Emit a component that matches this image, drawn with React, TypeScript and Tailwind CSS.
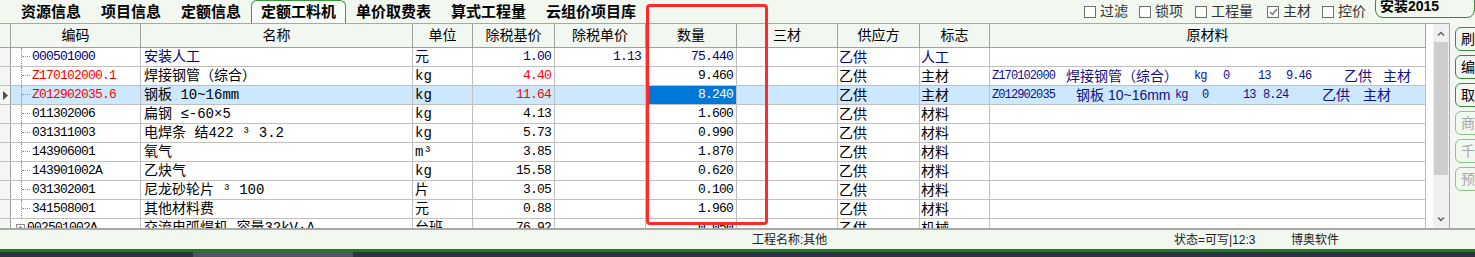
import React from "react";

type Row = {
  code: string;
  name: string;
  unit: string;
  base: string;
  price?: string;
  qty: string;
  supply: string;
  flag: string;
  tone?: "navy" | "red";
  raw?: [string, string, boolean][];
  group?: boolean;
};

const mono = "font-['Liberation_Mono','Noto_Sans_CJK_SC',monospace] tracking-[-0.8px] text-[13px]";

const rows: Row[] = [
  { code: "000501000", name: "安装人工", unit: "元", base: "1.00", price: "1.13", qty: "75.440", supply: "乙供", flag: "人工", tone: "navy" },
  {
    code: "Z170102000.1", name: "焊接钢管（综合）", unit: "kg", base: "4.40", qty: "9.460", supply: "乙供", flag: "主材", tone: "red",
    raw: [
      ["Z170102000", "w-[74px]", true],
      ["焊接钢管（综合）", "w-[128px]", false],
      ["kg", "w-[29px]", true],
      ["0", "w-[35px]", true],
      ["13", "w-[28px]", true],
      ["9.46", "w-[58px]", true],
      ["乙供", "w-[39px]", false],
      ["主材", "w-[40px]", false],
    ],
  },
  {
    code: "Z012902035.6", name: "钢板 10~16mm", unit: "kg", base: "11.64", qty: "8.240", supply: "乙供", flag: "主材", tone: "red",
    raw: [
      ["Z012902035", "w-[84px]", true],
      ["钢板 10~16mm", "w-[99px]", false],
      ["kg", "w-[27px]", true],
      ["0", "w-[41px]", true],
      ["13", "w-[20px]", true],
      ["8.24", "w-[59px]", true],
      ["乙供", "w-[41px]", false],
      ["主材", "w-[40px]", false],
    ],
  },
  { code: "011302006", name: "扁钢 ≤-60×5", unit: "kg", base: "4.13", qty: "1.600", supply: "乙供", flag: "材料" },
  { code: "031311003", name: "电焊条 结422 ³ 3.2", unit: "kg", base: "5.73", qty: "0.990", supply: "乙供", flag: "材料" },
  { code: "143906001", name: "氧气", unit: "m³", base: "3.85", qty: "1.870", supply: "乙供", flag: "材料" },
  { code: "143901002A", name: "乙炔气", unit: "kg", base: "15.58", qty: "0.620", supply: "乙供", flag: "材料" },
  { code: "031302001", name: "尼龙砂轮片 ³ 100", unit: "片", base: "3.05", qty: "0.100", supply: "乙供", flag: "材料" },
  { code: "341508001", name: "其他材料费", unit: "元", base: "0.88", qty: "1.960", supply: "乙供", flag: "材料" },
  { code: "002501002A", name: "交流电弧焊机 容量32kV·A", unit: "台班", base: "76.92", qty: "0.050", supply: "乙供", flag: "机械", group: true },
];

const heads: [string, string][] = [
  ["编码", "w-[130px]"],
  ["名称", "w-[272px]"],
  ["单位", "w-[60px]"],
  ["除税基价", "w-[82px]"],
  ["除税单价", "w-[91px]"],
  ["数量", "w-[91px]"],
  ["三材", "w-[101px]"],
  ["供应方", "w-[82px]"],
  ["标志", "w-[70px]"],
  ["原材料", "w-[436px]"],
];

const tabs = ["资源信息", "项目信息", "定额信息", "定额工料机", "单价取费表", "算式工程量", "云组价项目库"];

const cell = "h-full shrink-0 border-r border-[#c0c0c0] flex items-center overflow-hidden whitespace-nowrap";

function Check({ label, checked, className }: { label: string; checked?: boolean; className?: string }) {
  return (
    <div className={`flex items-center gap-[4px] ${className ?? ""}`}>
      <span className="w-[12px] h-[12px] border border-[#707070] bg-white flex items-center justify-center">
        {checked && (
          <svg width="9" height="8" viewBox="0 0 9 8">
            <polyline points="1,4 3.5,6.5 8,1" fill="none" stroke="#707070" strokeWidth="1.3" />
          </svg>
        )}
      </span>
      <span className="text-[14px] text-[#333]">{label}</span>
    </div>
  );
}

function GridRow({ r, selected }: { r: Row; selected: boolean }) {
  const navy = r.tone === "navy";
  const base = navy ? "text-[#000080]" : "text-black";
  const codeColor = r.tone === "red" ? "text-[#ff0000]" : base;
  const bg = selected ? "bg-[#cce8ff]" : "bg-white";
  return (
    <div className={`flex h-[19px] shrink-0 border-b border-[#c0c0c0] ${bg}`}>
      <div className="w-[11px] h-full shrink-0 border-r border-[#a0a0a0] bg-[#f3f7f1] flex items-center justify-center">
        {selected && (
          <svg width="5" height="9" viewBox="0 0 5 9">
            <polygon points="0,0 5,4.5 0,9" fill="#505050" />
          </svg>
        )}
      </div>
      <div className={`${cell} w-[130px]`}>
        {r.group ? (
          <div className="ml-[5px] w-[9px] h-[9px] border border-[#909090] bg-white flex items-center justify-center text-[9px] leading-none text-[#606060]">
            +
          </div>
        ) : (
          <div className="ml-[10px] w-[9px] h-full border-l border-dotted border-[#909090] flex flex-col">
            <div className="h-[9px] border-b border-dotted border-[#909090]" />
          </div>
        )}
        <span className={`ml-[2px] ${mono} ${codeColor}`}>{r.code}</span>
      </div>
      <div className={`${cell} w-[272px] pl-[3px] text-[14px] font-['Liberation_Mono','Noto_Sans_CJK_SC',monospace] ${base}`}>{r.name}</div>
      <div className={`${cell} w-[60px] pl-[2px] text-[14px] font-['Liberation_Mono','Noto_Sans_CJK_SC',monospace] ${base}`}>{r.unit}</div>
      <div className={`${cell} w-[82px] justify-end pr-[3px] ${mono} ${codeColor}`}>{r.base}</div>
      <div className={`${cell} w-[91px] justify-end pr-[4px] ${mono} ${base}`}>{r.price}</div>
      <div className={`${cell} w-[91px] justify-end pr-[3px] ${mono} ${selected ? "bg-[#0078d7] text-white" : base}`}>{r.qty}</div>
      <div className={`${cell} w-[101px]`} />
      <div className={`${cell} w-[82px] pl-[1px] text-[14px] ${base}`}>{r.supply}</div>
      <div className={`${cell} w-[70px] pl-[1px] text-[14px] ${base}`}>{r.flag}</div>
      <div className={`${cell} w-[436px] pl-[2px] text-[#10108a]`}>
        {r.raw?.map(([t, w, m], i) => (
          <span
            key={i}
            className={`${w} shrink-0 ${m ? "font-['Liberation_Mono',monospace] text-[12px] tracking-[-0.9px]" : "text-[14px]"}`}
          >
            {t}
          </span>
        ))}
      </div>
    </div>
  );
}

export default function App() {
  return (
    <div className="relative w-[1475px] h-[257px] overflow-hidden bg-[#f2f7f0] flex flex-col font-['Liberation_Sans','Noto_Sans_CJK_SC',sans-serif] text-black">
      {/* tabs + options */}
      <div className="flex h-[23px] shrink-0 items-center">
        <div className="flex h-full pl-[11px]">
          {tabs.map((t, i) => (
            <div
              key={t}
              className={`h-[23px] px-[9px] flex items-center text-[15px] font-bold border border-b-0 rounded-t-[6px] ${
                i === 3 ? "border-[#3a9a3a] bg-[#f8fbf7]" : "border-transparent"
              }`}
            >
              {t}
            </div>
          ))}
        </div>
        <div className="ml-auto flex items-center h-full">
          <Check label="过滤" />
          <Check label="锁项" className="ml-[11px]" />
          <Check label="工程量" className="ml-[12px]" />
          <Check label="主材" checked className="ml-[14px]" />
          <Check label="控价" className="ml-[11px]" />
          <div className="ml-[9px] w-[100px] h-[24px] -mt-[12px] self-start mt-[-6px] border border-[#3a8a3a] rounded-[8px] pl-[4px] flex items-center text-[14px] font-bold">
            安装2015
          </div>
        </div>
      </div>

      {/* grid area */}
      <div className="flex h-[205px] shrink-0">
        <div className="w-[1452px] h-full flex bg-white border-t border-r border-[#a8a8a8]">
          <div className="w-[1426px] h-full flex flex-col overflow-hidden">
            <div className="flex h-[24px] shrink-0 bg-[#f3f7f1] border-b border-[#a0a0a0]">
              <div className="w-[11px] h-full border-r border-[#a0a0a0]" />
              {heads.map(([h, w]) => (
                <div key={h} className={`${w} h-full shrink-0 border-r border-[#a0a0a0] flex items-center justify-center text-[14px]`}>
                  {h}
                </div>
              ))}
            </div>
            {rows.map((r, i) => (
              <GridRow key={r.code} r={r} selected={i === 2} />
            ))}
          </div>
          <div className="w-[7px]" />
          <div className="w-[16px] h-full bg-[#f0f0f0] flex flex-col">
            <div className="h-[18px] flex items-center justify-center">
              <svg width="8" height="5" viewBox="0 0 8 5">
                <polyline points="1,4.5 4,1.5 7,4.5" fill="none" stroke="#606060" strokeWidth="1.4" />
              </svg>
            </div>
            <div className="h-[133px] mx-[1px] bg-[#cdcdcd]" />
            <div className="flex-1" />
            <div className="h-[18px] flex items-center justify-center">
              <svg width="8" height="5" viewBox="0 0 8 5">
                <polyline points="1,0.5 4,3.5 7,0.5" fill="none" stroke="#606060" strokeWidth="1.4" />
              </svg>
            </div>
          </div>
        </div>
        <div className="flex flex-col gap-[4px] pl-[5px] pt-[4px]">
          {[
            ["刷新", false],
            ["编辑", false],
            ["取消", false],
            ["商品", true],
            ["千克", true],
            ["预览", true],
          ].map(([t, d]) => (
            <div
              key={t as string}
              className={`w-[44px] h-[24px] rounded-[6px] border pl-[5px] flex items-center text-[14px] overflow-hidden whitespace-nowrap ${
                d ? "border-[#8cc48c] text-[#a8a8a8]" : "border-[#3a8a3a] text-black"
              }`}
            >
              {t}
            </div>
          ))}
        </div>
      </div>

      {/* status bar */}
      <div className="h-[21px] shrink-0 border-t-2 border-[#a8a8a8] flex items-center text-[12px] text-[#222]">
        <span className="ml-[752px] w-[422px]">工程名称:其他</span>
        <span className="w-[117px]">状态=可写|12:3</span>
        <span>博奥软件</span>
      </div>
      <div className="h-[3px] shrink-0 bg-[#17801a]" />
      <div className="flex-1 flex bg-[#2b3540]">
        <div className="ml-[193px] w-[160px] bg-[#4e575e]" />
      </div>

      {/* annotation box */}
      <div className="absolute left-[646px] top-[4px] w-[122px] h-[221px] border-[3px] border-[#ff2b2b] rounded-[4px]" />
    </div>
  );
}
